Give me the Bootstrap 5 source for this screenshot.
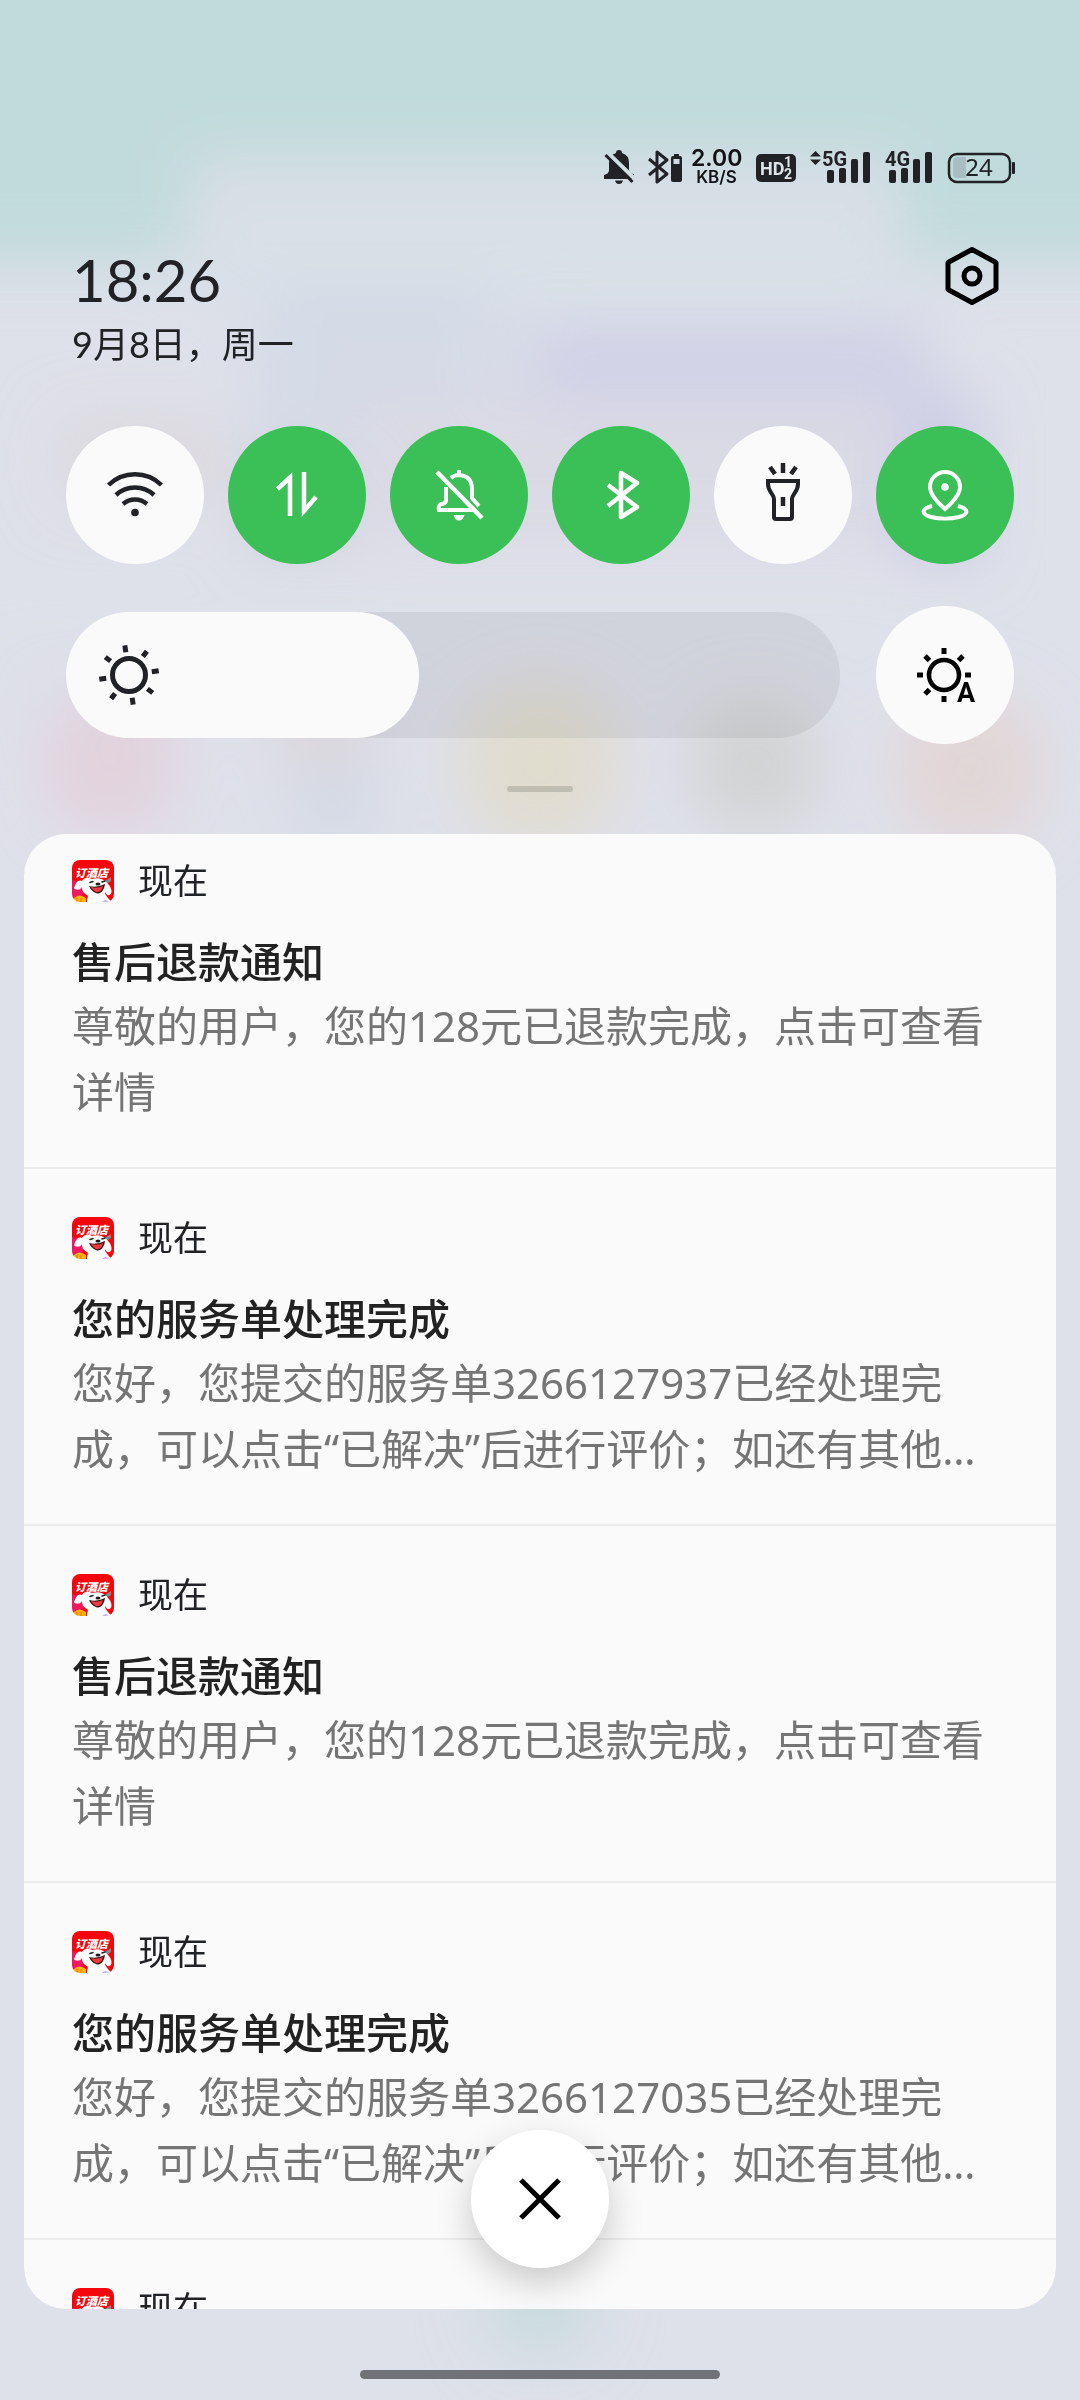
<!DOCTYPE html>
<html lang="zh-CN">
<head>
<meta charset="utf-8">
<meta name="viewport" content="width=device-width, initial-scale=1">
<title>通知中心</title>
<link href="https://cdn.jsdelivr.net/npm/bootstrap@5.3.0/dist/css/bootstrap.min.css" rel="stylesheet">
<style>
  :root { --ink: #202226; --paper: #fafafa; --on: #3bbf57; --round: 138px; }
  body { background: #dfe1ea; color: var(--ink); font-family: "Noto Sans", "Noto Sans CJK SC", sans-serif; }
  svg { display: block; overflow: visible; }
  .backdrop { inset: 0; z-index: -1; overflow: hidden; }
  .backdrop svg { width: 100%; height: 100%; }
  .shade { min-height: 600px; }

  .status-row { padding: 148px 65px 0; gap: 14px; height: 186px; }
  .link-state { gap: 9px; }
  .net-speed { width: 51px; font-family: Inter, sans-serif; font-weight: 600; color: #111316; }
  .net-speed .rate { font-size: 23px; line-height: 20px; }
  .net-speed .unit { font-size: 17px; line-height: 18px; }

  .clock-row { padding: 64px 66px 0 72px; font-family: Lato, "Noto Sans CJK SC", sans-serif; }
  .clock { font-size: 58px; line-height: 60px; }
  .day { font-size: 36px; line-height: 44px; margin-top: 12px; }
  .gear { width: 84px; height: 52px; }

  .quick { padding: 60px 66px 0; }
  .tile { width: var(--round); height: var(--round); background: var(--paper); color: var(--ink); }
  .tile.on { background: var(--on); color: #fff; }
  .tile svg, .closer svg { fill: none; stroke: currentColor; stroke-width: 5; }
  .tile .solid { fill: currentColor; stroke: none; }

  .bright-row { padding: 42px 66px 0; gap: 36px; }
  .bright { height: 126px; }
  .bright input { appearance: none; -webkit-appearance: none; width: 100%; height: 126px; margin: 0; border-radius: 63px;
    background: linear-gradient(90deg, var(--paper) calc(63px + (100% - 126px) * var(--level)), rgba(0,0,0,.06) 0); }
  .bright input::-webkit-slider-thumb { -webkit-appearance: none; width: 126px; height: 126px; border-radius: 50%; background: var(--paper); }
  .bright svg { left: 33px; top: 33px; pointer-events: none; fill: none; stroke: var(--ink); stroke-width: 5; }

  .grip { width: 66px; height: 6px; border-radius: 3px; background: rgba(0,0,0,.14); margin: 42px auto; }

  .panel-wrap { min-height: 0; margin: 0 24px; }
  .panel { border-radius: 42px; background: var(--paper); }
  .note { padding: 48px 48px 42px; border-bottom: 2px solid #ececec; }
  .note:first-child { padding-top: 26px; }
  .note header { height: 42px; gap: 24px; font-size: 35px; line-height: 44px; margin-bottom: 28px; }
  .note h2 { font-size: 42px; line-height: 60px; font-weight: 500; margin: 0 0 3px; color: #222; font-family: "Noto Sans CJK SC", sans-serif; }
  .note p { font-size: 42px; line-height: 66px; margin: 0; color: #757575; }
  .closer { width: var(--round); height: var(--round); bottom: 41px; left: calc(50% - 69px); background: #fff; color: #000;
    box-shadow: 0 14px 36px rgba(0,0,0,.2); }
  .home-area { padding: 61px 0 21px; }
  .home-bar { width: 33.33%; height: 9px; border-radius: 5px; background: #707277; }
</style>
<script src="https://cdn.jsdelivr.net/npm/bootstrap@5.3.0/dist/js/bootstrap.bundle.min.js"></script>
</head>
<body>
<div class="backdrop position-fixed" aria-hidden="true">
  <svg viewBox="0 0 1080 2400" preserveAspectRatio="none">
    <defs>
      <filter id="soft" x="-50%" y="-50%" width="200%" height="200%"><feGaussianBlur stdDeviation="30"/></filter>
    </defs>
    <g filter="url(#soft)">
      <rect x="-100" y="-100" width="1280" height="365" fill="#c1dadb"/>
      <rect x="190" y="160" width="710" height="150" fill="#d9e0e7"/>
      <rect x="250" y="290" width="260" height="170" fill="#d4dae6"/>
      <rect x="60" y="420" width="160" height="80" fill="#dcd8dc"/>
      <rect x="250" y="460" width="90" height="90" fill="#cccfd8"/>
      <rect x="350" y="390" width="600" height="160" fill="#dadae5"/>
      <rect x="530" y="325" width="400" height="75" fill="#cfd0e6"/>
      <rect x="900" y="400" width="80" height="160" fill="#cbcbe4"/>
      <rect x="20" y="670" width="220" height="40" fill="#dadee7"/>
      <circle cx="110" cy="765" r="70" fill="#e2d2dc"/>
      <circle cx="325" cy="735" r="50" fill="#dcd6d9"/>
      <circle cx="335" cy="805" r="44" fill="#d2d9e5"/>
      <circle cx="540" cy="765" r="78" fill="#e0dbcd"/>
      <circle cx="755" cy="765" r="66" fill="#d2d3d3"/>
      <circle cx="970" cy="770" r="76" fill="#e1d6d6"/>
      <circle cx="540" cy="2300" r="60" fill="#c9dcdd"/>
    </g>
  </svg>
</div>

<svg width="0" height="0" class="position-absolute" aria-hidden="true">
  <defs>
    <clipPath id="appClip"><rect width="42" height="42" rx="8"/></clipPath>
    <symbol id="appIcon" viewBox="0 0 42 42">
      <g clip-path="url(#appClip)">
        <rect width="42" height="42" fill="#f5060c"/>
        <path d="M0 20 12 24 10 42H0Z" fill="#f0185f"/>
        <path d="M10 21C12 17 17 17 20 19 27 17 34 20 36 24 40 28 41 34 37 35 35 36 34 33 33 32 33 36 37 38 39 42H15C15 38 17 36 15 35 11 33 10 30 10 27 8 31 3 30 2 28 4 24 5 19 10 21Z" fill="#fff"/>
        <path d="M17 26Q25 28 33 24C32 31 28 35 24 33 21 32 18 29 17 26Z" fill="#3a1111"/>
        <path d="M19 27Q25 29 31 26C30 31 27 33 24 32 22 31 20 29 19 27Z" fill="#ef3840"/>
        <path d="M18 22.500l3-1M30 22l3-1" stroke="#222" stroke-width="1.500" stroke-linecap="round"/>
        <ellipse cx="26" cy="24" rx="2.500" ry="1.500" fill="#1c1c1c"/>
        <path d="M33 21 39 17V21L36 23Z" fill="#71939b"/>
        <path d="M2 42V38Q7 33 14 38V42Z" fill="#ffb100"/>
        <path d="M5 38v4M9 38v4" stroke="#e8720b" stroke-width="1"/>
        <path d="M30 42Q34 38 37 42Z" fill="#c8b4ee"/>
        <text x="3" y="17" font-family="Noto Sans CJK SC, sans-serif" font-size="11" font-weight="900" font-style="italic" fill="#fff">订酒店</text>
      </g>
    </symbol>
  </defs>
</svg>

<div class="shade vh-100 d-flex flex-column">
  <div class="status-row d-flex justify-content-end align-items-center flex-shrink-0">
    <svg width="30" height="34" viewBox="0 0 30 34" role="img" aria-label="静音">
      <mask id="cut"><rect x="-2" y="-2" width="36" height="38" fill="#fff"/><path d="M2 1 33 31" stroke="#000" stroke-width="4"/></mask>
      <g fill="#202226" mask="url(#cut)">
        <path d="M12 3Q12 0 15 0T18 3Q25 5 25 13V20Q26 24 30 24V29H0V25Q5 24 5 20V13Q5 5 12 3Z"/>
        <path d="M11 30.500H19Q18 34 15 34T11 30.500Z"/>
      </g>
      <path d="M1.500 5 28.500 32" stroke="#202226" stroke-width="3"/>
    </svg>
    <div class="link-state d-flex align-items-center">
      <svg width="34" height="34" viewBox="0 0 34 34" role="img" aria-label="蓝牙">
        <path d="M1 9 19 24 9 32V2L19 10 1 25" fill="none" stroke="#202226" stroke-width="3" stroke-linejoin="round"/>
        <path d="M26 4h5v2h1q2 0 2 2v22q0 2-2 2H25q-2 0-2-2V8q0-2 2-2h1ZM25.500 9v5h6V9Z" fill="#202226" fill-rule="evenodd"/>
      </svg>
      <div class="net-speed text-center text-nowrap">
        <div class="rate">2.00</div>
        <div class="unit">KB/S</div>
      </div>
    </div>
    <svg width="40" height="34" viewBox="0 0 40 34" font-family="Roboto, sans-serif" font-weight="700" fill="#dfe3ea">
      <rect y="4" width="40" height="28" rx="5" fill="#202226"/>
      <text x="4" y="25" font-size="18">HD</text>
      <text x="28" y="17" font-size="14">1</text>
      <text x="28" y="29" font-size="14">2</text>
    </svg>
    <svg width="62" height="34" viewBox="0 0 62 34" fill="#202226">
      <path d="M0 6.500 5.500 1 11 6.500ZM0 9.500H11L5.500 15Z"/>
      <text x="12" y="16" font-family="Roboto, sans-serif" font-size="20" font-weight="700">5G</text>
      <rect x="17" y="20" width="7" height="13" rx="2"/><rect x="29" y="18" width="7" height="15" rx="2"/>
      <rect x="41" y="9" width="7" height="24" rx="2"/><rect x="53" y="2" width="7" height="31" rx="2"/>
    </svg>
    <svg width="48" height="34" viewBox="0 0 48 34" fill="#202226">
      <text x="-1" y="16" font-family="Roboto, sans-serif" font-size="20" font-weight="700">4G</text>
      <rect x="3" y="20" width="7" height="13" rx="2"/><rect x="15" y="18" width="7" height="15" rx="2"/>
      <rect x="27" y="9" width="7" height="24" rx="2"/><rect x="39" y="2" width="7" height="31" rx="2"/>
    </svg>
    <svg width="67" height="34" viewBox="0 0 67 34">
      <path d="M5 11Q5 7 9 7H18V28H9Q5 28 5 24Z" fill="#a9bdc4"/>
      <rect x="1" y="4" width="61" height="28" rx="8" fill="none" stroke="#202226" stroke-width="2.500"/>
      <rect x="64" y="12" width="3" height="12" rx="1" fill="#202226"/>
      <text x="31" y="26" text-anchor="middle" font-family="Noto Sans, sans-serif" font-size="24" fill="#202226">24</text>
    </svg>
  </div>

  <div class="clock-row d-flex justify-content-between align-items-start flex-shrink-0">
    <div>
      <div class="clock">18:26</div>
      <div class="day">9月8日，周一</div>
    </div>
    <button class="gear btn border-0 p-0 d-flex justify-content-center align-items-center" aria-label="设置">
      <svg width="60" height="60" viewBox="-30 -30 60 60" fill="none" stroke="#000" stroke-width="5" stroke-linejoin="round">
        <path d="M0-26.500 24-13.500V13.500L0 26.500-24 13.500V-13.500Z"/><circle r="8"/>
      </svg>
    </button>
  </div>

  <div class="quick d-flex justify-content-between flex-shrink-0">
    <button class="tile btn border-0 rounded-circle p-0 d-flex justify-content-center align-items-center" aria-label="WLAN">
      <svg width="60" height="60" viewBox="-30 -30 60 60"><path d="M-26.500-10A38 38 0 0 1 26.500-10M-19 0A28 28 0 0 1 19 0M-12 9A18 18 0 0 1 12 9" stroke-width="4.500"/><circle class="solid" cy="17.500" r="3.800"/></svg>
    </button>
    <button class="tile on btn border-0 rounded-circle p-0 d-flex justify-content-center align-items-center" aria-label="移动数据">
      <svg width="60" height="60" viewBox="-30 -30 60 60"><path d="M-19.500-6-7-17.500V21M7-23V16L19 2" stroke-width="4.500"/></svg>
    </button>
    <button class="tile on btn border-0 rounded-circle p-0 d-flex justify-content-center align-items-center" aria-label="静音">
      <svg width="60" height="60" viewBox="-30 -30 60 60"><path d="M0-25V-20M-8-17Q-5-20 0-20 13-19 13-6V3Q17 8 20 11M-13-8V6Q-14 9-18 9-21 11-20 15H14" stroke-width="4"/><path d="M-22-23 23 23" stroke-width="4.500"/><path class="solid" d="M-5.500 20H5.500Q4 25.500 0 25.500T-5.500 20Z"/></svg>
    </button>
    <button class="tile on btn border-0 rounded-circle p-0 d-flex justify-content-center align-items-center" aria-label="蓝牙">
      <svg width="60" height="60" viewBox="-30 -30 60 60" stroke-linejoin="round"><path d="M-13-10 16 12 0 22V-22L16-12-13 11" stroke-width="4.500"/></svg>
    </button>
    <button class="tile btn border-0 rounded-circle p-0 d-flex justify-content-center align-items-center" aria-label="手电筒">
      <svg width="60" height="60" viewBox="-30 -30 60 60"><path d="M0-32V-22M-13-28-8-21M13-28 8-21M0 2V11" stroke-width="4.500"/><path d="M-15-14H15V-11C15-3 9-1 9 4V22Q9 24 7 24H-7Q-9 24-9 22V4C-9-1-15-3-15-11Z" stroke-width="4"/></svg>
    </button>
    <button class="tile on btn border-0 rounded-circle p-0 d-flex justify-content-center align-items-center" aria-label="位置信息">
      <svg width="60" height="60" viewBox="-30 -30 60 60"><path d="M0 14C-8 7-15-1-15-8A15 15 0 0 1 15-8C15-1 8 7 0 14ZM-13 11C-24 14-24 19-14 22-6 24 6 24 14 22 24 19 24 14 13 11" stroke-width="4"/><circle class="solid" cy="-8" r="3.800"/></svg>
    </button>
  </div>

  <div class="bright-row d-flex align-items-center flex-shrink-0">
    <div class="bright position-relative flex-grow-1 d-flex">
      <input type="range" min="0" max="100" value="35" aria-label="亮度" style="--level:.35">
      <svg class="position-absolute" width="60" height="60" viewBox="-30 -30 60 60">
        <circle r="16.500"/>
        <g transform="rotate(-8)"><path d="M0-23V-30M0 23V30M-23 0H-30M23 0H30M16.300-16.300 21-21M-16.300-16.300-21-21M-16.300 16.300-21 21M16.300 16.300 21 21"/></g>
      </svg>
    </div>
    <button class="tile btn border-0 rounded-circle p-0 d-flex justify-content-center align-items-center text-black" aria-label="自动亮度">
      <svg width="60" height="60" viewBox="-30 -30 60 60">
        <g transform="translate(-1 0)"><circle r="15" stroke-width="4.500"/><path d="M0-21V-27M0 21V27M-21 0H-27M21 0H27M14.500-14.500 19-19M-14.500-14.500-19-19M-14.500 14.500-19 19"/></g>
        <text class="solid" x="12" y="27" font-family="Roboto, sans-serif" font-size="27" font-weight="700">A</text>
      </svg>
    </button>
  </div>

  <div class="grip flex-shrink-0"></div>

  <main class="panel-wrap position-relative flex-grow-1">
    <div class="panel h-100 overflow-hidden">
      <article class="note">
        <header class="d-flex align-items-center"><svg width="42" height="42"><use href="#appIcon"/></svg><span>现在</span></header>
        <h2>售后退款通知</h2>
        <p>尊敬的用户，您的128元已退款完成，点击可查看详情</p>
      </article>
      <article class="note">
        <header class="d-flex align-items-center"><svg width="42" height="42"><use href="#appIcon"/></svg><span>现在</span></header>
        <h2>您的服务单处理完成</h2>
        <p>您好，您提交的服务单3266127937已经处理完成，可以点击“已解决”后进行评价；如还有其他…</p>
      </article>
      <article class="note">
        <header class="d-flex align-items-center"><svg width="42" height="42"><use href="#appIcon"/></svg><span>现在</span></header>
        <h2>售后退款通知</h2>
        <p>尊敬的用户，您的128元已退款完成，点击可查看详情</p>
      </article>
      <article class="note">
        <header class="d-flex align-items-center"><svg width="42" height="42"><use href="#appIcon"/></svg><span>现在</span></header>
        <h2>您的服务单处理完成</h2>
        <p>您好，您提交的服务单3266127035已经处理完成，可以点击“已解决”后进行评价；如还有其他…</p>
      </article>
      <article class="note">
        <header class="d-flex align-items-center"><svg width="42" height="42"><use href="#appIcon"/></svg><span>现在</span></header>
      </article>
    </div>
    <button class="closer btn border-0 rounded-circle p-0 position-absolute d-flex justify-content-center align-items-center" aria-label="清除全部">
      <svg width="60" height="60" viewBox="-30 -30 60 60"><path d="M-19-19 19 19M19-19-19 19"/></svg>
    </button>
  </main>

  <div class="home-area d-flex justify-content-center flex-shrink-0"><div class="home-bar"></div></div>
</div>
</body>
</html>
